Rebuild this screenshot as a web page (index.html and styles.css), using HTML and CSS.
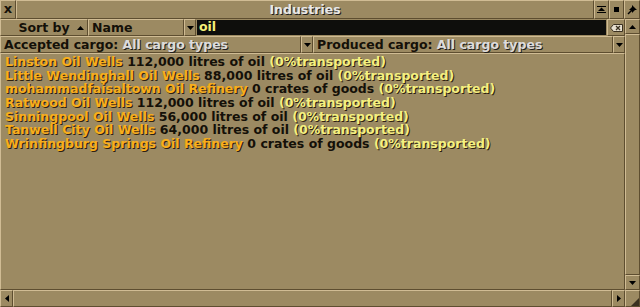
FILE: index.html
```html
<!DOCTYPE html>
<html>
<head>
<meta charset="utf-8">
<link rel="stylesheet" href="styles.css">
</head>
<body>
<div class="window">
  <div class="titlebar">
    <div class="btn close"><span>x</span></div>
    <div class="btn caption"><span class="cap-text">Industries</span></div>
    <div class="btn tb"><svg width="9" height="7" viewBox="0 0 9 7"><rect x="0" y="0" width="9" height="1" fill="#000"/><polygon points="1,5 8,5 4.5,1.5" fill="#000"/><rect x="0" y="6" width="9" height="1" fill="#000"/></svg></div>
    <div class="btn tb"><svg width="5" height="5" viewBox="0 0 5 5"><rect width="5" height="5" fill="#000"/></svg></div>
    <div class="btn tb last"><svg width="11" height="11" viewBox="0 0 11 11"><polygon points="5,1 10,6 8,6 6,8 6,9 2,5 3,5 5,3" fill="#000"/><line x1="4" y1="7" x2="1" y2="10" stroke="#000" stroke-width="1.4"/></svg></div>
  </div>
  <div class="main">
    <div class="left">
      <div class="row">
        <div class="btn sortby"><span class="lbl">Sort by</span><svg class="tri" width="7" height="4" viewBox="0 0 7 4"><polygon points="0,4 7,4 3.5,0" fill="#000"/></svg></div>
        <div class="btn dd name"><span class="lbl">Name</span></div>
        <div class="btn ddarrow"><svg width="7" height="4" viewBox="0 0 7 4"><polygon points="0,0 7,0 3.5,4" fill="#000"/></svg></div>
        <div class="editwrap"><div class="edit">oil</div></div>
        <div class="btn clear"><svg width="13" height="8" viewBox="0 0 13 8"><path d="M0.5 4 L3.5 0.5 H12.5 V7.5 H3.5 Z" fill="#e8e0d0" stroke="#3a3020" stroke-width="1"/><path d="M6 2 L10 6 M10 2 L6 6" stroke="#3a3020" stroke-width="1.3"/></svg></div>
      </div>
      <div class="row">
        <div class="btn dd cargo"><span class="lbl">Accepted cargo: <span class="white">All cargo types</span></span></div>
        <div class="btn ddarrow"><svg width="7" height="4" viewBox="0 0 7 4"><polygon points="0,0 7,0 3.5,4" fill="#000"/></svg></div>
        <div class="btn dd cargo2"><span class="lbl">Produced cargo: <span class="white">All cargo types</span></span></div>
        <div class="btn ddarrow"><svg width="7" height="4" viewBox="0 0 7 4"><polygon points="0,0 7,0 3.5,4" fill="#000"/></svg></div>
      </div>
      <div class="list">
        <div class="item"><span class="orange">Linston Oil Wells</span> 112,000 litres of oil <span class="yellow">(0%transported)</span></div>
        <div class="item"><span class="orange">Little Wendinghall Oil Wells</span> 88,000 litres of oil <span class="yellow">(0%transported)</span></div>
        <div class="item"><span class="orange">mohammadfaisaltown Oil Refinery</span> 0 crates of goods <span class="yellow">(0%transported)</span></div>
        <div class="item"><span class="orange">Ratwood Oil Wells</span> 112,000 litres of oil <span class="yellow">(0%transported)</span></div>
        <div class="item"><span class="orange">Sinningpool Oil Wells</span> 56,000 litres of oil <span class="yellow">(0%transported)</span></div>
        <div class="item"><span class="orange">Tanwell City Oil Wells</span> 64,000 litres of oil <span class="yellow">(0%transported)</span></div>
        <div class="item"><span class="orange">Wrinfingburg Springs Oil Refinery</span> 0 crates of goods <span class="yellow">(0%transported)</span></div>
      </div>
    </div>
    <div class="vscroll">
      <div class="btn sbtn"><svg width="7" height="4" viewBox="0 0 7 4"><polygon points="0,4 7,4 3.5,0" fill="#000"/></svg></div>
      <div class="btn strack"></div>
      <div class="btn sbtn"><svg width="7" height="4" viewBox="0 0 7 4"><polygon points="0,0 7,0 3.5,4" fill="#000"/></svg></div>
    </div>
  </div>
  <div class="bottom">
    <div class="btn hbtn"><svg width="4" height="7" viewBox="0 0 4 7"><polygon points="4,0 4,7 0,3.5" fill="#000"/></svg></div>
    <div class="btn htrack"></div>
    <div class="btn hbtn"><svg width="4" height="7" viewBox="0 0 4 7"><polygon points="0,0 0,7 4,3.5" fill="#000"/></svg></div>
    <div class="btn resize"><svg width="10" height="10" viewBox="0 0 10 10"><polygon points="10,2 10,10 2,10" fill="#3a3020"/></svg></div>
  </div>
</div>
</body>
</html>
```
FILE: styles.css
```css
* { box-sizing: border-box; }
html, body { margin: 0; padding: 0; }
body {
  width: 640px;
  height: 307px;
  overflow: hidden;
  background: #9c8a62;
  font-family: "DejaVu Sans", "Liberation Sans", sans-serif;
  font-weight: bold;
  font-size: 12.5px;
  color: #141008;
}
.window {
  width: 640px;
  height: 307px;
  display: flex;
  flex-direction: column;
  background: #9c8a62;
}
.btn {
  background: #9c8a62;
  border: 1px solid;
  border-color: #d0bc94 #5e4e30 #5e4e30 #d0bc94;
  display: flex;
  align-items: center;
  justify-content: center;
}
.titlebar {
  height: 19px;
  display: flex;
}
.close { width: 16px; }
.close span { font-size: 13px; line-height: 1; margin-top: -2px; }
.caption { flex: 1; }
.cap-text {
  color: #e8e8e8;
  text-shadow: 1px 1px 0 #202020;
}
.tb { width: 15px; }
.tb.last { width: 16px; }
.main {
  flex: 1;
  display: flex;
}
.left {
  flex: 1;
  display: flex;
  flex-direction: column;
}
.row {
  height: 17px;
  display: flex;
}
.lbl { white-space: nowrap; }
.sortby {
  width: 88px;
  justify-content: center;
  gap: 7px;
  padding-left: 14px;
}
.dd { justify-content: flex-start; padding-left: 3px; }
.name { width: 96px; }
.ddarrow { width: 12px; }
.editwrap {
  flex: 1;
  background: #9c8a62;
  padding: 1px 1px 1px 1px;
  display: flex;
}
.edit {
  flex: 1;
  background: #0e0e0c;
  color: #f4f078;
  padding-left: 2px;
  line-height: 14px;
  text-shadow: none;
}
.clear { width: 18px; }
.cargo { width: 301px; }
.cargo2 { flex: 1; }
.white { color: #dcdcdc; text-shadow: 1px 1px 0 #202020; }
.list {
  flex: 1;
  border: 1px solid;
  border-color: #d0bc94 #5e4e30 #5e4e30 #d0bc94;
  padding: 1px 0 0 4px;
}
.item {
  height: 13.7px;
  line-height: 13.7px;
  white-space: nowrap;
}
.orange { color: #f8ae1c; text-shadow: 1px 1px 0 #2c2010; }
.yellow { color: #f4f080; text-shadow: 1px 1px 0 #2c2010; }
.vscroll {
  width: 15px;
  display: flex;
  flex-direction: column;
}
.sbtn { height: 15px; }
.strack { flex: 1; }
.bottom {
  height: 17px;
  display: flex;
}
.hbtn { width: 13px; }
.htrack { flex: 1; }
.resize { width: 15px; align-items: flex-end; justify-content: flex-end; }
```
